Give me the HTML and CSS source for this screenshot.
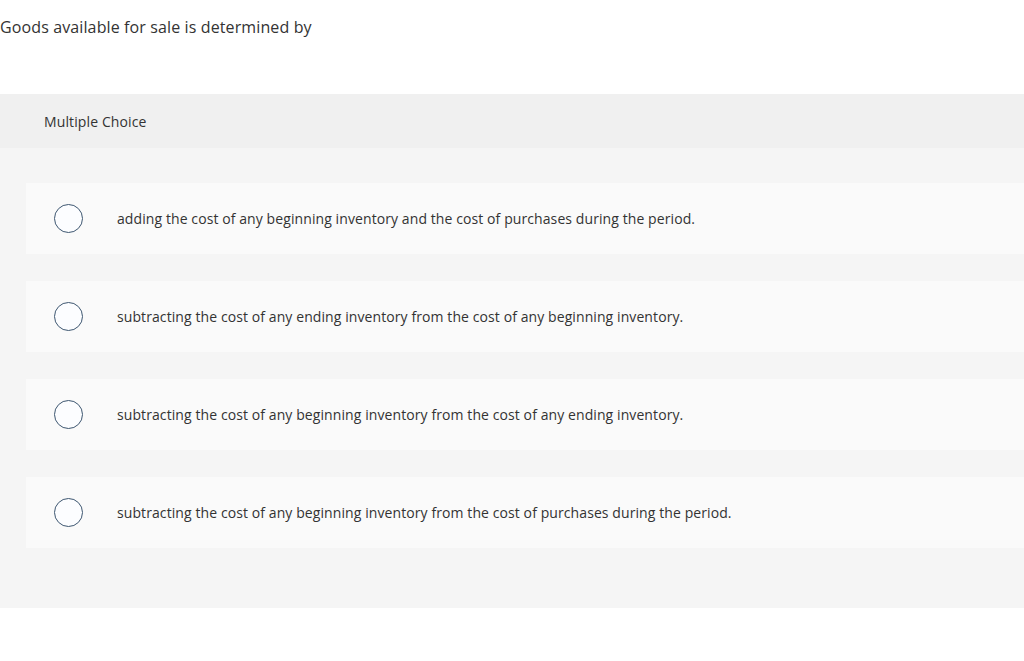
FILE: index.html
```html
<!DOCTYPE html>
<html lang="en">
<head>
<meta charset="utf-8">
<title>Multiple Choice</title>
<link rel="stylesheet" href="styles.css">
</head>
<body>
<div class="question">Goods available for sale is determined by</div>
<section class="mc">
  <div class="mc-header">Multiple Choice</div>
  <div class="mc-body">
    <div class="option"><span class="radio"></span><span class="label">adding the cost of any beginning inventory and the cost of purchases during the period.</span></div>
    <div class="option"><span class="radio"></span><span class="label">subtracting the cost of any ending inventory from the cost of any beginning inventory.</span></div>
    <div class="option"><span class="radio"></span><span class="label">subtracting the cost of any beginning inventory from the cost of any ending inventory.</span></div>
    <div class="option"><span class="radio"></span><span class="label">subtracting the cost of any beginning inventory from the cost of purchases during the period.</span></div>
  </div>
</section>
</body>
</html>
```
FILE: styles.css
```css
html, body {
  margin: 0;
  padding: 0;
  background: #ffffff;
}
body {
  font-family: "Open Sans", "Lato", sans-serif;
  color: #333333;
  width: 1024px;
  height: 661px;
  overflow: hidden;
}
.question {
  font-size: 16px;
  line-height: 20px;
  letter-spacing: 0.12px;
  padding-top: 17px;
  height: 94px;
  box-sizing: border-box;
  color: #333;
}
.mc-header {
  background: #f0f0f0;
  height: 54px;
  display: flex;
  align-items: center;
  padding-left: 44px;
  font-size: 14px;
  letter-spacing: 0.12px;
}
.mc-body {
  background: #f5f5f5;
  padding: 35px 0 60px 26px;
  display: flex;
  flex-direction: column;
  gap: 27px;
}
.option {
  background: #fafafa;
  height: 71px;
  display: flex;
  align-items: center;
  padding-left: 28px;
}
.radio {
  width: 27px;
  height: 27px;
  border: 1.5px solid #3d5670;
  border-radius: 50%;
  background: #fcfdff;
  flex: none;
}
.label {
  margin-left: 34px;
  font-size: 14px;
  letter-spacing: 0.09px;
  color: #333;
}
```
